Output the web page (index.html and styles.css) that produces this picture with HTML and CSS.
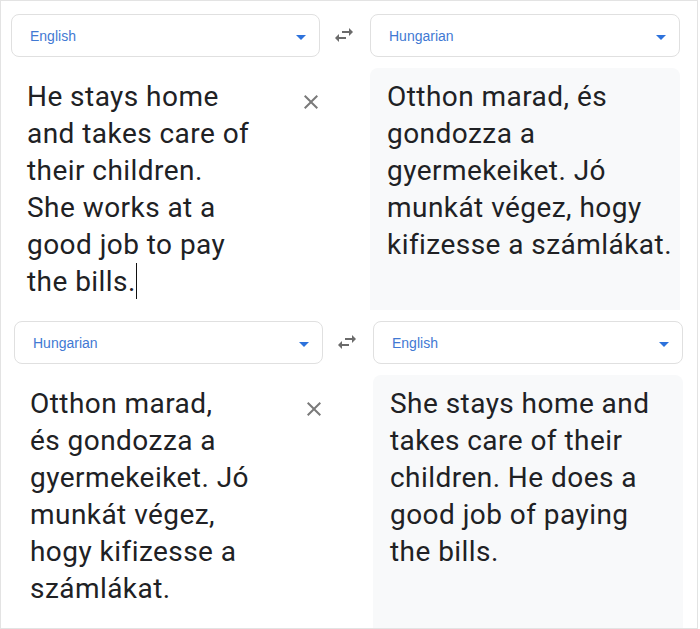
FILE: index.html
```html
<!DOCTYPE html>
<html lang="en">
<head>
<meta charset="utf-8">
<title>Translate</title>
<link rel="stylesheet" href="styles.css">
</head>
<body>
<div class="shot shot-top">
  <div class="picker">
    <span class="lang">English</span>
    <svg class="caret" viewBox="7 10 10 5" width="10" height="5"><path d="M7 10l5 5 5-5z"/></svg>
  </div>
  <div class="swap">
    <svg viewBox="3 5 18 14" width="18" height="14"><path d="M6.99 11L3 15l3.99 4v-3H14v-2H6.99v-3zM21 9l-4-4v3h-7v2h7v3l4-4z"/></svg>
  </div>
  <div class="picker">
    <span class="lang">Hungarian</span>
    <svg class="caret" viewBox="7 10 10 5" width="10" height="5"><path d="M7 10l5 5 5-5z"/></svg>
  </div>
  <div class="source">
    <div class="text">He stays home<br>and takes care of<br>their children.<br>She works at a<br>good job to pay<br>the bills.<span class="cursor"></span></div>
    <svg class="clear" viewBox="5 5 14 14" width="14" height="14"><path d="M19 6.41L17.59 5 12 10.59 6.41 5 5 6.41 10.59 12 5 17.59 6.41 19 12 13.41 17.59 19 19 17.59 13.41 12z"/></svg>
  </div>
  <div></div>
  <div class="target">
    <div class="text">Otthon marad, és<br>gondozza a<br>gyermekeiket. Jó<br>munkát végez, hogy<br>kifizesse a számlákat.</div>
  </div>
</div>
<div class="shot shot-bottom">
  <div class="picker">
    <span class="lang">Hungarian</span>
    <svg class="caret" viewBox="7 10 10 5" width="10" height="5"><path d="M7 10l5 5 5-5z"/></svg>
  </div>
  <div class="swap">
    <svg viewBox="3 5 18 14" width="18" height="14"><path d="M6.99 11L3 15l3.99 4v-3H14v-2H6.99v-3zM21 9l-4-4v3h-7v2h7v3l4-4z"/></svg>
  </div>
  <div class="picker">
    <span class="lang">English</span>
    <svg class="caret" viewBox="7 10 10 5" width="10" height="5"><path d="M7 10l5 5 5-5z"/></svg>
  </div>
  <div class="source">
    <div class="text">Otthon marad,<br>és gondozza a<br>gyermekeiket. Jó<br>munkát végez,<br>hogy kifizesse a<br>számlákat.</div>
    <svg class="clear" viewBox="5 5 14 14" width="14" height="14"><path d="M19 6.41L17.59 5 12 10.59 6.41 5 5 6.41 10.59 12 5 17.59 6.41 19 12 13.41 17.59 19 19 17.59 13.41 12z"/></svg>
  </div>
  <div></div>
  <div class="target">
    <div class="text">She stays home and<br>takes care of their<br>children. He does a<br>good job of paying<br>the bills.</div>
  </div>
</div>
</body>
</html>
```

FILE: styles.css
```css
html, body {
  margin: 0;
  padding: 0;
  background: #ffffff;
}

body {
  width: 700px;
  height: 629px;
  overflow: hidden;
  font-family: Roboto, "Liberation Sans", sans-serif;
  color: #202124;
}

.shot {
  box-sizing: border-box;
  display: grid;
  grid-template-columns: 309px 50px 310px;
  grid-template-rows: 43px 1fr;
  row-gap: 11px;
  border: 1px solid #e3e3e3;
}

.shot-top {
  width: 698px;
  height: 310px;
  border-bottom: none;
  padding: 13px 0 0 10px;
}

.shot-bottom {
  width: 698px;
  height: 319px;
  border-top: none;
  padding: 11px 0 0 13px;
}

.picker {
  box-sizing: border-box;
  display: flex;
  align-items: center;
  justify-content: space-between;
  border: 1px solid #e0e0e0;
  border-radius: 8px;
  padding: 0 13px 0 18px;
  background: #ffffff;
}

.lang {
  font-family: "Liberation Sans", Arial, sans-serif;
  font-size: 14px;
  color: #4179d3;
  margin-top: 1px;
}

.caret {
  fill: #2d72dc;
  margin-top: 3px;
}

.swap {
  display: flex;
  align-items: center;
  padding-left: 15px;
}

.swap svg {
  fill: #6b6b6b;
  margin-top: -1px;
}

.source {
  display: flex;
  justify-content: space-between;
  align-items: flex-start;
  padding: 10px 2px 0 16px;
}

.clear {
  fill: #7a7a7a;
  margin-top: 17px;
}

.target {
  background: #f8f9fa;
  border-radius: 8px 8px 0 0;
  padding: 10px 10px 0 17px;
}

.text {
  font-size: 28px;
  line-height: 37px;
  letter-spacing: 0.45px;
  white-space: nowrap;
}

.cursor {
  display: inline-block;
  width: 1px;
  height: 36px;
  background: #111;
  vertical-align: top;
}
```
